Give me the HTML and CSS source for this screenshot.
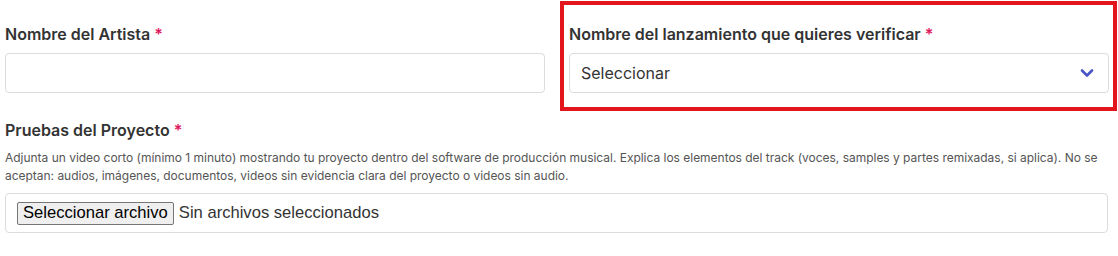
FILE: index.html
```html
<!DOCTYPE html>
<html lang="es">
<head>
<meta charset="utf-8">
<link rel="stylesheet" href="styles.css">
</head>
<body>
<form class="form">
  <div class="row">
    <div class="field field-left">
      <label class="label">Nombre del Artista <span class="req">*</span></label>
      <input class="input" type="text">
    </div>
    <div class="field field-highlight">
      <label class="label">Nombre del lanzamiento que quieres verificar <span class="req">*</span></label>
      <div class="select">
        <span>Seleccionar</span>
        <svg class="chev" width="14" height="10" viewBox="0 0 14 10"><path d="M2 2.5 L7 7.5 L12 2.5" fill="none" stroke="#4a55c9" stroke-width="2.6" stroke-linecap="round" stroke-linejoin="round"/></svg>
      </div>
    </div>
  </div>
  <div class="field field-full">
    <label class="label">Pruebas del Proyecto <span class="req">*</span></label>
    <p class="help">Adjunta un video corto (mínimo 1 minuto) mostrando tu proyecto dentro del software de producción musical. Explica los elementos del track (voces, samples y partes remixadas, si aplica). No se aceptan: audios, imágenes, documentos, videos sin evidencia clara del proyecto o videos sin audio.</p>
    <div class="file">
      <button type="button" class="file-btn">Seleccionar archivo</button>
      <span class="file-name">Sin archivos seleccionados</span>
    </div>
  </div>
</form>
</body>
</html>
```

FILE: styles.css
```css
* { box-sizing: border-box; }
html, body { margin: 0; background: #fff; }
body { font-family: Inter, "Noto Sans", sans-serif; color: #333; }

.form { padding: 1px 10px 0 5px; }

.row {
  display: grid;
  grid-template-columns: 540px 557px;
  column-gap: 15px;
}

.field { display: flex; flex-direction: column; }
.field-left { padding-top: 23px; }
.field-highlight {
  border: 4px solid #e3151c;
  padding: 19px 5px 14px 5px;
}

.label {
  font-size: 16px;
  font-weight: 600;
  color: #333;
  line-height: 20px;
  margin-bottom: 9px;
}
.req { color: #e0195e; }

.input, .select {
  height: 40px;
  border: 1px solid #dcdcdc;
  border-radius: 4px;
  background: #fff;
  width: 540px;
}
.input { padding: 0 12px; font: inherit; outline: none; }

.select {
  display: flex;
  align-items: center;
  justify-content: space-between;
  padding: 0 14px 0 11px;
  font-size: 16px;
  color: #333;
}
.chev { display: block; }

.field-full { padding-top: 9px; width: 1103px; }
.field-full .label { margin-bottom: 9px; }

.help {
  margin: 0 0 8px;
  font-size: 12px;
  line-height: 18px;
  color: #555;
  letter-spacing: -0.02px;
}

.file {
  height: 40px;
  border: 1px solid #dcdcdc;
  border-radius: 4px;
  display: flex;
  align-items: center;
  padding: 0 11px;
  font-family: "Liberation Sans", Arial, sans-serif;
  font-size: 16.6px;
  color: #333;
}
.file-btn {
  font-family: "Liberation Sans", Arial, sans-serif;
  font-size: 16.6px;
  color: #000;
  background: #efefef;
  border: 1px solid #767676;
  border-radius: 2px;
  padding: 0 5px;
  height: 23px;
  line-height: 20px;
  margin-right: 5px;
}
.file-name { color: #333; }
```
